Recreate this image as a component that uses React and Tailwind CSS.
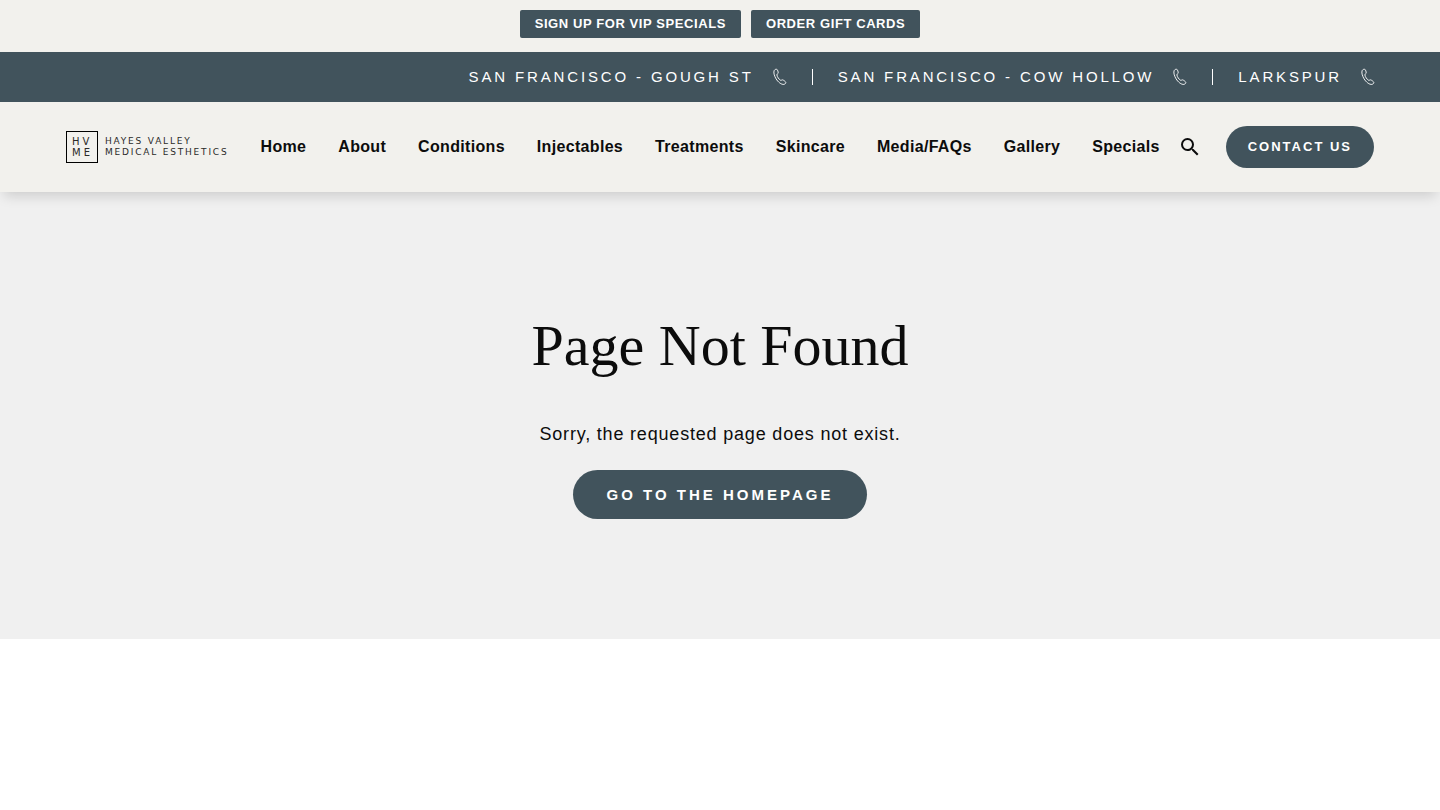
const navItems = [
  "Home",
  "About",
  "Conditions",
  "Injectables",
  "Treatments",
  "Skincare",
  "Media/FAQs",
  "Gallery",
  "Specials",
];

const locations = [
  "San Francisco - Gough St",
  "San Francisco - Cow Hollow",
  "Larkspur",
];

function PhoneIcon() {
  return (
    <svg
      viewBox="0 0 14 18"
      className="h-[18px] w-3.5"
      fill="none"
      stroke="currentColor"
      strokeWidth="0.9"
      strokeLinejoin="round"
      aria-hidden="true"
    >
      <path d="M1.3 2.3C1.9 1.5 3 1 3.8 1.3C4.6 1.7 5.3 4 5.2 5C5.1 5.8 3.8 6 3.9 7C4.1 8.7 6 11.4 7.4 12.2C8.3 12.7 9 11.6 9.8 11.9C10.8 12.3 12.5 13.5 12.8 14.4C13 15.3 11.9 16.2 10.9 16.4C8.4 16.8 5 14 3.1 10.9C1.4 8.1 0.1 4.1 1.3 2.3Z" />
    </svg>
  );
}

function SearchIcon() {
  return (
    <svg viewBox="0 0 24 24" className="size-6" fill="currentColor" aria-hidden="true">
      <path d="M15.5 14h-.79l-.28-.27A6.471 6.471 0 0 0 16 9.5 6.5 6.5 0 1 0 9.5 16c1.61 0 3.09-.59 4.23-1.57l.27.28v.79l5 4.99L20.49 19l-4.99-5zm-6 0C7.01 14 5 11.99 5 9.5S7.01 5 9.5 5 14 7.01 14 9.5 11.99 14 9.5 14z" />
    </svg>
  );
}

function Logo() {
  return (
    <a
      href="#"
      className="flex items-center gap-[7px] font-['DejaVu_Sans',sans-serif] text-[9px] leading-[11px] tracking-[0.2em] text-[#2a2a28] uppercase"
    >
      <span className="flex size-8 flex-col items-start justify-center border border-black pl-[5px] text-[10px] tracking-[0.3em]">
        <span>HV</span>
        <span>ME</span>
      </span>
      <span className="flex flex-col whitespace-nowrap">
        <span>Hayes Valley</span>
        <span>Medical Esthetics</span>
      </span>
    </a>
  );
}

export default function App() {
  return (
    <div className="font-['Liberation_Sans',Arial,sans-serif] text-[#0c0c0c]">
      <div className="flex justify-center gap-2.5 bg-[#f2f1ed] pt-2.5 pb-3.5 text-[13px] leading-7 font-bold tracking-[0.045em] text-white uppercase">
        <a href="#" className="rounded-xs bg-[#41535c] px-[15px]">
          Sign up for VIP specials
        </a>
        <a href="#" className="rounded-xs bg-[#41535c] px-[15px]">
          Order gift cards
        </a>
      </div>

      <div className="flex h-[50px] items-center justify-end bg-[#41535c] px-[65px] text-[15px] tracking-[0.19em] text-white uppercase">
        {locations.map((name, i) => (
          <div key={name} className="flex items-center">
            {i > 0 && <span className="mx-[25px] h-4 w-px bg-white" />}
            <a href="#">{name}</a>
            <a href="#" aria-label={`Call ${name}`} className="ml-[19px]">
              <PhoneIcon />
            </a>
          </div>
        ))}
      </div>

      <header className="relative flex h-[90px] items-center justify-between bg-[#f2f1ed] px-[66px] shadow-[0_8px_12px_-4px_rgba(0,0,0,0.15)]">
        <Logo />
        <div className="flex items-center">
          <nav className="flex gap-8 text-base font-bold tracking-[0.02em]">
            {navItems.map((item) => (
              <a key={item} href="#">
                {item}
              </a>
            ))}
          </nav>
          <button type="button" aria-label="Search" className="ml-[18px]">
            <SearchIcon />
          </button>
          <a
            href="#"
            className="ml-6 rounded-full bg-[#41535c] px-[22px] text-[13px] leading-[42px] font-bold tracking-[2px] text-white uppercase"
          >
            Contact us
          </a>
        </div>
      </header>

      <main className="flex flex-col items-center bg-[#f0f0f0] px-6 pt-[120px] pb-[120px] text-center">
        <h1 className="font-['Liberation_Serif','Times_New_Roman',serif] text-[58px] leading-[68px]">
          Page Not Found
        </h1>
        <p className="mt-[38px] text-lg leading-8 tracking-[0.045em]">
          Sorry, the requested page does not exist.
        </p>
        <a
          href="#"
          className="mt-5 rounded-full bg-[#41535c] px-[34px] text-[15px] leading-[49px] font-bold tracking-[0.2em] text-white uppercase"
        >
          Go to the homepage
        </a>
      </main>
    </div>
  );
}
